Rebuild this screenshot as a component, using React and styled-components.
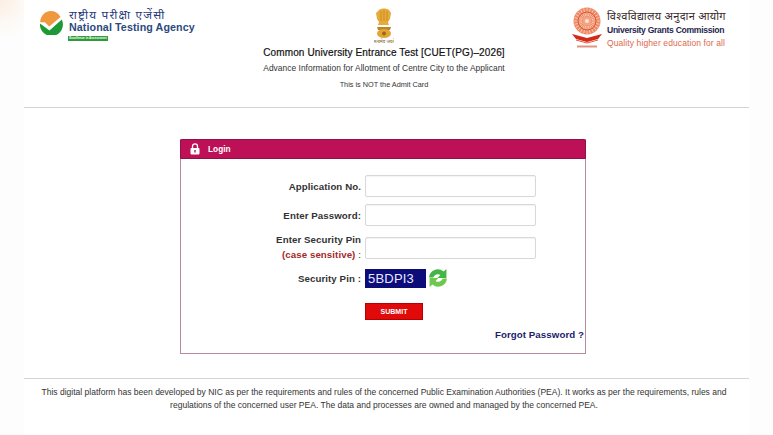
import React from "react";
import styled, { createGlobalStyle } from "styled-components";

const Global = createGlobalStyle`
  html, body { margin: 0; padding: 0; background: #fff; }
  body {
    width: 773px; height: 435px; overflow: hidden;
    font-family: "Liberation Sans", Arial, "Noto Sans", sans-serif;
    background:
      radial-gradient(circle at 0 0, #fbeee2 0, #fdf9f5 24px, rgba(255,255,255,0) 40px),
      #fdfdfd;
  }
`;

const Page = styled.div`
  width: 725px; height: 435px; margin-left: 24px; background: #fff;
  display: flex; flex-direction: column; align-items: stretch;
`;
const Header = styled.header`
  height: 107px; border-bottom: 1px solid #d4d4d4; box-sizing: content-box;
  display: grid; grid-template-columns: 239px minmax(0, 1fr) 244px;
`;
const LeftBrand = styled.div`
  display: flex; gap: 6px; padding: 10px 0 0 15px; align-items: flex-start;
`;
const BrandText = styled.div`display: flex; flex-direction: column;`;
const HindiName = styled.div`
  font-size: 11.8px; line-height: 13px; color: #2a3a78; letter-spacing: 1.2px; margin-top: -2px;
  font-family: "Noto Sans", "Liberation Sans", sans-serif; white-space: nowrap;
`;
const AgencyName = styled.div`
  font-size: 10.7px; line-height: 13px; font-weight: 700; color: #2b4a7e; white-space: nowrap; letter-spacing: .1px;
`;
const Tag = styled.div`
  margin: 2px 0 0 -1px; width: 40px; height: 5px; background: #2f9a3a; color: #fff;
  font-size: 3px; line-height: 5px; font-weight: 700; text-align: center; white-space: nowrap; overflow: hidden;
`;
const Center = styled.div`
  display: flex; flex-direction: column; align-items: center; padding-top: 8px;
`;
const Title = styled.h1`
  margin: 1px 0 0; font-size: 10px; line-height: 14px; font-weight: 400; color: #111;
  white-space: nowrap; letter-spacing: .13px; -webkit-text-stroke: .2px #111;
`;
const Subtitle = styled.p`
  margin: 2px 0 0; font-size: 8.4px; line-height: 12px; color: #333; white-space: nowrap; letter-spacing: .04px;
`;
const Note = styled.p`
  margin: 5px 0 0; font-size: 7.3px; line-height: 11px; color: #333; white-space: nowrap;
`;
const RightBrand = styled.div`
  display: flex; gap: 5px; padding: 7px 0 0 67px; align-items: flex-start;
`;
const UgcHindi = styled.div`
  font-size: 11px; line-height: 14px; color: #3a2a2a; letter-spacing: .3px; margin-top: 2px;
  font-family: "Noto Sans", "Liberation Sans", sans-serif; white-space: nowrap;
`;
const UgcName = styled.div`
  font-size: 8.6px; line-height: 13px; font-weight: 700; color: #26264e; white-space: nowrap; margin-top: 1px;
  letter-spacing: -.3px;
`;
const UgcMotto = styled.div`
  font-size: 8.5px; line-height: 13px; color: #dc6a4a; white-space: nowrap; letter-spacing: .1px;
`;

const Main = styled.main`
  flex: none; height: 270px; padding: 31px 0 0 156px; box-sizing: border-box;
`;
const Panel = styled.section`
  width: 406px; height: 215px; box-sizing: border-box;
  border: 1px solid #b98aa4; border-top: 0;
  display: flex; flex-direction: column;
`;
const PanelHead = styled.div`
  height: 20px; margin: 0 -1px 0 -1px; background: #bd1056; color: #fff; border-radius: 2px 2px 0 0;
  border: 1px solid #8e1148; box-sizing: border-box;
  display: flex; align-items: center; gap: 8px; padding-left: 9px;
  font-size: 8.3px; font-weight: 700;
`;
const Form = styled.form`
  display: grid; grid-template-columns: 180px 171px; column-gap: 4px; align-items: center;
  padding-top: 16px; grid-auto-rows: auto; row-gap: 7px;
`;
const Label = styled.label`
  text-align: right; font-size: 9.7px; line-height: 15px; font-weight: 700; color: #333; white-space: nowrap;
  letter-spacing: .08px;
`;
const StackedLabel = styled(Label)`margin-top: -1px;`;
const Sensitive = styled.span`color: #a32a2a;`;
const Colon = styled.span`font-weight: 400;`;
const Input = styled.input`
  width: 171px; height: 22px; box-sizing: border-box; border: 1px solid #d8d8d8; border-radius: 2px;
  background: #fff; box-shadow: inset 0 1px 1px rgba(0,0,0,.05); padding: 0 6px; outline: 0;
`;
const CaptchaRow = styled.div`display: flex; align-items: center; gap: 2px; height: 20px; margin-top: -1px;`;
const Captcha = styled.div`
  width: 61px; height: 19px; background: #0d0d7a; color: #e8e8ff; font-size: 13px; line-height: 19px;
  padding-left: 3px; box-sizing: border-box; letter-spacing: .2px;
`;
const Spacer = styled.span``;
const Submit = styled.button`
  width: 58px; height: 17px; margin-top: 8px; padding: 0; border: 1px solid #b80000; border-radius: 0;
  background: #e00a0a; color: #fff; font: 700 7px "Liberation Sans", Arial, sans-serif;
`;
const Forgot = styled.a`
  align-self: flex-end; margin: 8px 1px 0 0; font-size: 9.7px; line-height: 14px; font-weight: 700; color: #1c1c6e;
  letter-spacing: .08px;
`;
const Footer = styled.footer`
  border-top: 1px solid #d4d4d4; padding: 7px 5px 0 0; text-align: center;
  font-size: 8.52px; line-height: 12.6px; color: #333;
`;

function NtaLogo() {
  return (
    <svg width="24" height="25" viewBox="0 0 24 25">
      <path d="M1 12a11 11 0 0 1 21-4.500L10 17 5 12.500z" fill="#f0983e" />
      <path d="M1 13.500 L10.500 20.500 L22.800 9.500A11.500 11.500 0 1 1 1 13.500z" fill="#1d9a35" />
      <path d="M5 12.500 10.300 17.500 22 7.500" fill="none" stroke="#fff" strokeWidth="1.500" />
    </svg>
  );
}
function Emblem() {
  return (
    <svg width="20" height="37" viewBox="0 0 20 37">
      <path d="M5 2c2-2 8-2 10 0l2 3-1 6-2 3 1 3H4l1-3-2-3-1-6z" fill="#e6ab3a" />
      <path d="M7 3v10M10 2v11M13 3v10" stroke="#c98c20" strokeWidth="1" />
      <path d="M3 19h14l-1 3H4z" fill="#b98528" />
      <ellipse cx="10" cy="25.500" rx="7" ry="4.500" fill="#e2a432" />
      <circle cx="10" cy="25.500" r="2" fill="#9a6a1c" />
      <text x="10" y="35" textAnchor="middle" fontSize="4.500" fill="#7a5a20" fontFamily="Noto Sans, sans-serif">सत्यमेव जयते</text>
    </svg>
  );
}
function UgcLogo() {
  const rays = Array.from({ length: 24 }, (_, i) => i * 15);
  return (
    <svg width="30" height="42" viewBox="0 0 30 42">
      <g transform="translate(15 14)">
        <circle r="13.500" fill="#ee8a66" />
        {rays.map((a) => (
          <line key={a} x1="0" y1="-5" x2="0" y2="-13" stroke="#fbd6c4" strokeWidth=".7" transform={`rotate(${a})`} />
        ))}
        <circle r="9" fill="none" stroke="#d9552f" strokeWidth="1" />
        <circle r="4.500" fill="#f3a583" />
        <circle r="2" fill="#fbe3d6" />
      </g>
      <path d="M0 27l15 4 15-4-4 5-11 3-11-3z" fill="#d22a18" />
      <path d="M4 33l11 3 11-3" fill="none" stroke="#e2583a" strokeWidth="1" />
      <rect x="5" y="38.500" width="20" height="2" fill="#d4674d" opacity=".7" />
    </svg>
  );
}
function Lock() {
  return (
    <svg width="10" height="12" viewBox="0 0 10 12">
      <path d="M2.500 5V3.300a2.500 2.500 0 0 1 5 0V5" fill="none" stroke="#fff" strokeWidth="1.300" />
      <rect x="0.500" y="5" width="9" height="6.500" rx="1" fill="#fff" />
      <rect x="4.300" y="7" width="1.400" height="2.500" fill="#bd1056" />
    </svg>
  );
}
function Refresh() {
  return (
    <svg width="20" height="20" viewBox="0 0 19 19">
      <path d="M1 9a8.300 8.300 0 0 1 13.800-5.600L17.500 1v8.500H9l2.800-2.800A4.500 4.500 0 0 0 5 9z" fill="#42b544" />
      <path d="M18 10a8.300 8.300 0 0 1-13.800 5.600L1.500 18V9.500H10l-2.800 2.800A4.500 4.500 0 0 0 14 10z" fill="#6ec74e" />
    </svg>
  );
}

export default function App() {
  return (
    <>
      <Global />
      <Page>
        <Header>
          <LeftBrand>
            <NtaLogo />
            <BrandText>
              <HindiName>राष्ट्रीय परीक्षा एजेंसी</HindiName>
              <AgencyName>National Testing Agency</AgencyName>
              <Tag>Excellence in Assessment</Tag>
            </BrandText>
          </LeftBrand>
          <Center>
            <Emblem />
            <Title>Common University Entrance Test [CUET(PG)–2026]</Title>
            <Subtitle>Advance Information for Allotment of Centre City to the Applicant</Subtitle>
            <Note>This is NOT the Admit Card</Note>
          </Center>
          <RightBrand>
            <UgcLogo />
            <BrandText>
              <UgcHindi>विश्वविद्यालय अनुदान आयोग</UgcHindi>
              <UgcName>University Grants Commission</UgcName>
              <UgcMotto>Quality higher education for all</UgcMotto>
            </BrandText>
          </RightBrand>
        </Header>
        <Main>
          <Panel>
            <PanelHead><Lock />Login</PanelHead>
            <Form>
              <Label>Application No.</Label>
              <Input />
              <Label>Enter Password:</Label>
              <Input type="password" />
              <StackedLabel>Enter Security Pin<br /><Sensitive>(case sensitive)</Sensitive> <Colon>:</Colon></StackedLabel>
              <Input />
              <Label>Security Pin :</Label>
              <CaptchaRow><Captcha>5BDPI3</Captcha><Refresh /></CaptchaRow>
              <Spacer />
              <Submit type="button">SUBMIT</Submit>
            </Form>
            <Forgot>Forgot Password ?</Forgot>
          </Panel>
        </Main>
        <Footer>
          This digital platform has been developed by NIC as per the requirements and rules of the concerned Public Examination Authorities (PEA). It works as per the requirements, rules and<br />
          regulations of the concerned user PEA. The data and processes are owned and managed by the concerned PEA.
        </Footer>
      </Page>
    </>
  );
}
